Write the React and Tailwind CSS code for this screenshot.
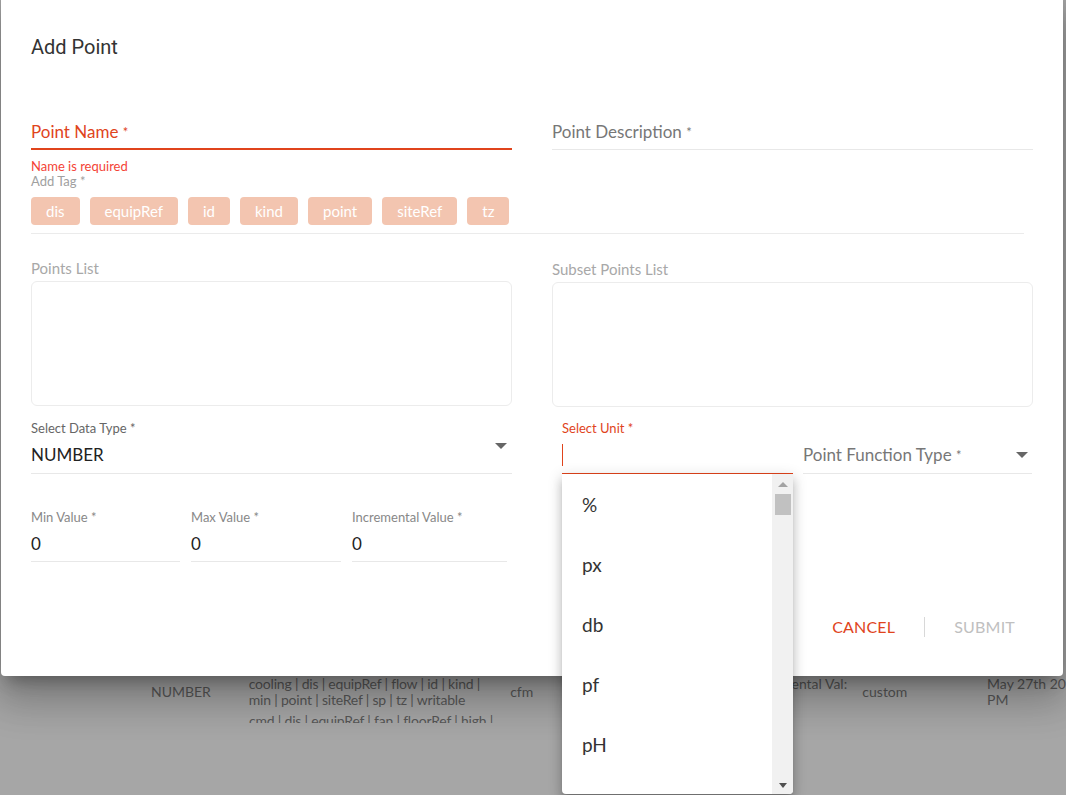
import React from "react";

const TAGS = ["dis", "equipRef", "id", "kind", "point", "siteRef", "tz"];
const UNITS = ["%", "px", "db", "pf", "pH"];

const Arrow = ({ className }) => (
  <svg width="12" height="6" viewBox="0 0 12 6" className={className}>
    <path d="M0 0h12L6 6z" fill="#666" />
  </svg>
);

const SmallField = ({ label, width }) => (
  <div className={width}>
    <div className="text-[13px] leading-[15px] text-[#888]">{label} *</div>
    <div className="mt-[9px] pb-[7px] border-b border-[#e8e8e8] text-[17px] leading-[20px] text-[#222]">0</div>
  </div>
);

export default function App() {
  return (
    <div
      className="relative w-[1066px] h-[795px] overflow-hidden bg-[#a6a6a6]"
      style={{ fontFamily: "Lato, 'Open Sans', sans-serif" }}
    >
      {/* table behind the overlay */}
      <div className="h-[723px] overflow-hidden">
        <div className="h-[672px]" />
        <div className="flex h-[40px] items-center text-[14px] leading-[16px] text-[#575757]">
          <div className="w-[249px] pl-[151px]">NUMBER</div>
          <div className="w-[262px] -mt-[1px] tracking-[-0.2px]">
            cooling | dis | equipRef | flow | id | kind |<br />min | point | siteRef | sp | tz | writable
          </div>
          <div className="w-[282px]">cfm</div>
          <div className="w-[71px] self-start pt-[4px]">ental Val:</div>
          <div className="w-[125px]">custom</div>
          <div className="self-start pt-[4px] whitespace-nowrap">May 27th 20<br />PM</div>
        </div>
        <div className="pl-[249px] pt-[1px] text-[14px] leading-[16px] text-[#575757] tracking-[-0.2px]">
          cmd | dis | equipRef | fan | floorRef | high |
        </div>
      </div>

      {/* modal */}
      <div className="absolute left-[1px] top-[-4px] w-[1062px] rounded-[4px] bg-white px-[30px] pt-[38px] pb-[39px] shadow-[0_11px_15px_-7px_rgba(0,0,0,0.3),0_24px_38px_3px_rgba(0,0,0,0.18),0_9px_46px_8px_rgba(0,0,0,0.12)]">
        <div className="h-[26px] text-[20px] leading-[26px] text-[#333]" style={{ fontFamily: "Roboto, sans-serif" }}>
          Add Point
        </div>

        <div className="mt-[61px] grid grid-cols-[481px_481px] gap-x-[40px]">
          <div>
            <div className="pt-[1px] pb-[6px] border-b-2 border-[#e0441c] text-[17px] leading-[20px] text-[#e0441c]">
              Point Name <span className="text-[13px] align-top">*</span>
            </div>
          </div>
          <div>
            <div className="pt-[1px] pb-[7px] border-b border-[#e8e8e8] text-[17px] leading-[20px] text-[#777]">
              Point Description <span className="text-[13px] align-top">*</span>
            </div>
          </div>
        </div>

        <div className="mt-[9px] text-[13px] leading-[15px] text-[#f44336]">Name is required</div>
        <div className="text-[13px] leading-[15px] text-[#a0a0a0]">Add Tag *</div>
        <div className="mt-[8px] flex gap-[10px]">
          {TAGS.map((t) => (
            <div key={t} className="h-[28px] rounded-[4px] bg-[#f3c5b0] px-[15px] text-[15px] leading-[28px] text-white">
              {t}
            </div>
          ))}
        </div>
        <div className="mt-[8px] mr-[9px] h-px bg-[#ebebeb]" />

        <div className="mt-[25px] grid grid-cols-[481px_481px] gap-x-[40px]">
          <div>
            <div className="text-[15px] leading-[18px] text-[#a8a8a8]">Points List</div>
            <div className="mt-[4px] h-[125px] rounded-[6px] border border-[#ececec]" />
          </div>
          <div className="pt-[1px]">
            <div className="text-[15px] leading-[18px] text-[#a8a8a8]">Subset Points List</div>
            <div className="mt-[4px] h-[125px] rounded-[6px] border border-[#ececec]" />
          </div>
        </div>

        <div className="mt-[14px] grid grid-cols-[481px_481px] gap-x-[40px]">
          <div>
            <div className="text-[13px] leading-[15px] text-[#666]">Select Data Type *</div>
            <div className="mt-[9px] flex items-start justify-between pb-[8px] border-b border-[#e8e8e8]">
              <span className="text-[17px] leading-[20px] text-[#222]">NUMBER</span>
              <Arrow className="mt-[-2px] mr-[5px]" />
            </div>
          </div>
          <div className="flex gap-[10px] pl-[10px]">
            <div className="w-[231px]">
              <div className="text-[13px] leading-[15px] text-[#e0441c]">Select Unit *</div>
              <div className="mt-[8px] h-[20px] pb-[9px] box-content border-b-2 border-[#e0441c]">
                <div className="mt-[3px] h-[22px] w-px bg-[#e0441c]" />
              </div>
            </div>
            <div className="w-[229px] pt-[24px]">
              <div className="flex items-center justify-between pb-[8px] border-b border-[#e8e8e8]">
                <span className="text-[17px] leading-[20px] text-[#777]">
                  Point Function Type <span className="text-[13px] align-top">*</span>
                </span>
                <Arrow className="mr-[4px]" />
              </div>
            </div>
          </div>
        </div>

        <div className="mt-[35px] flex gap-[11px]">
          <SmallField label="Min Value" width="w-[149px]" />
          <SmallField label="Max Value" width="w-[150px]" />
          <SmallField label="Incremental Value" width="w-[155px]" />
        </div>

        <div className="mt-[55px] flex items-center justify-end gap-[29px] pr-[18px] text-[16px] leading-[18px] tracking-[0.2px]">
          <span className="text-[#e0441c]">CANCEL</span>
          <span className="h-[20px] w-px bg-[#d8d8d8]" />
          <span className="text-[#c0c0c0]">SUBMIT</span>
        </div>
      </div>

      {/* unit dropdown */}
      <div className="absolute left-[562px] top-[474px] flex h-[320px] w-[231px] overflow-hidden rounded-b-[4px] bg-white shadow-[0_5px_5px_-3px_rgba(0,0,0,0.2),0_8px_10px_1px_rgba(0,0,0,0.14),0_3px_14px_2px_rgba(0,0,0,0.12)]">
        <div className="flex-1 pt-[1px]">
          {UNITS.map((u) => (
            <div key={u} className="flex h-[60px] items-center pl-[20px] text-[19px] text-[#333]">
              {u}
            </div>
          ))}
        </div>
        <div className="flex w-[21px] flex-col items-center bg-[#f1f1f1] pt-[8px]">
          <svg width="10" height="5" viewBox="0 0 10 5"><path d="M0 5h10L5 0z" fill="#a3a3a3" /></svg>
          <div className="mt-[7px] h-[21px] w-[16px] bg-[#c1c1c1]" />
          <div className="flex-1" />
          <svg width="8" height="5" viewBox="0 0 8 5" className="mb-[6px]"><path d="M0 0h8L4 5z" fill="#505050" /></svg>
        </div>
      </div>
    </div>
  );
}
